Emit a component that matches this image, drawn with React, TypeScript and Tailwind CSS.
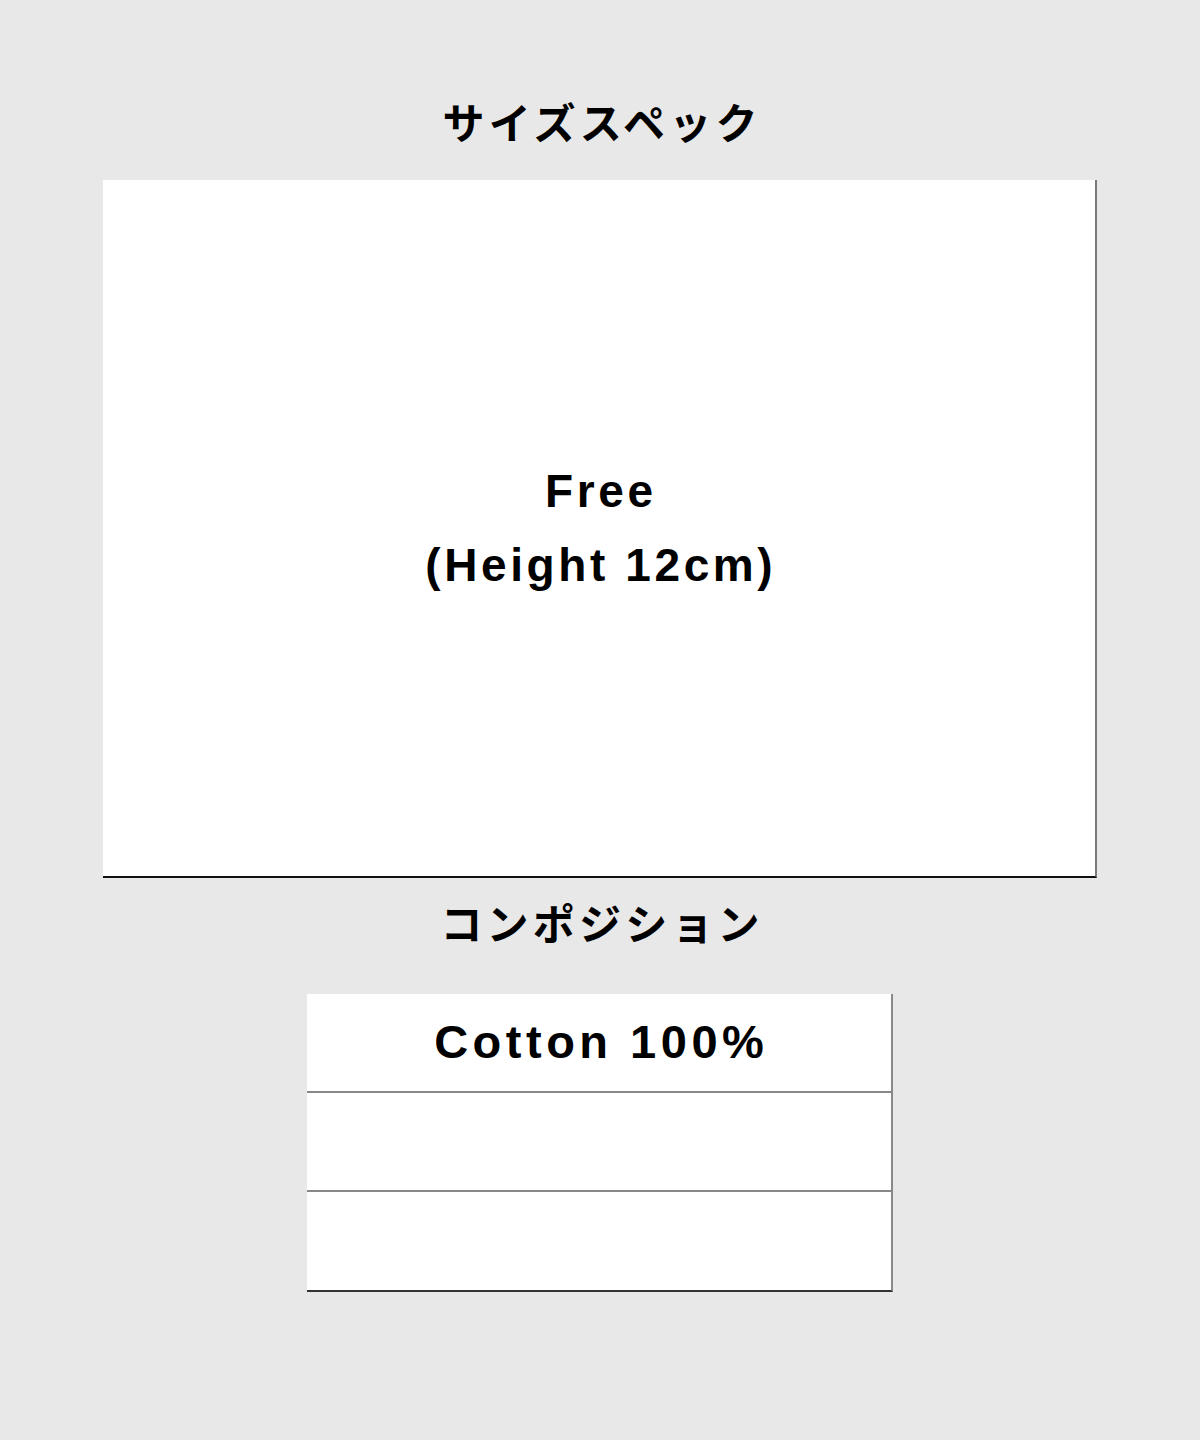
export default function App() {
  const font = { fontFamily: '"Liberation Sans", "Noto Sans CJK JP", sans-serif' };
  return (
    <div className="w-[1200px] h-[1440px] bg-[#e8e8e8] flex flex-col items-center text-black" style={font}>
      <h1 className="mt-[99px] h-[52px] text-[42px] leading-[52px] font-bold tracking-[0.1em] pl-[0.1em]">サイズスペック</h1>
      <div className="mt-[29px] w-[994px] h-[698px] bg-white border-r-2 border-r-[#7a7a7a] border-b-2 border-b-[#111] flex flex-col items-center justify-center">
        <p className="text-[46px] leading-[74px] font-bold text-center tracking-[3.6px] pl-[3.6px]">
          Free
          <br />
          (Height 12cm)
        </p>
      </div>
      <h2 className="mt-[22px] h-[52px] text-[42px] leading-[52px] font-bold tracking-[0.1em] pl-[0.1em]">コンポジション</h2>
      <div className="mt-[42px] w-[586px] bg-white border-r-2 border-r-[#888] border-b-2 border-b-[#333] flex flex-col">
        <div className="h-[99px] border-b-2 border-b-[#888] flex items-center justify-center text-[47px] font-bold tracking-[4.5px] pl-[4.5px]">Cotton 100%</div>
        <div className="h-[99px] border-b-2 border-b-[#888]" />
        <div className="h-[98px]" />
      </div>
    </div>
  );
}
